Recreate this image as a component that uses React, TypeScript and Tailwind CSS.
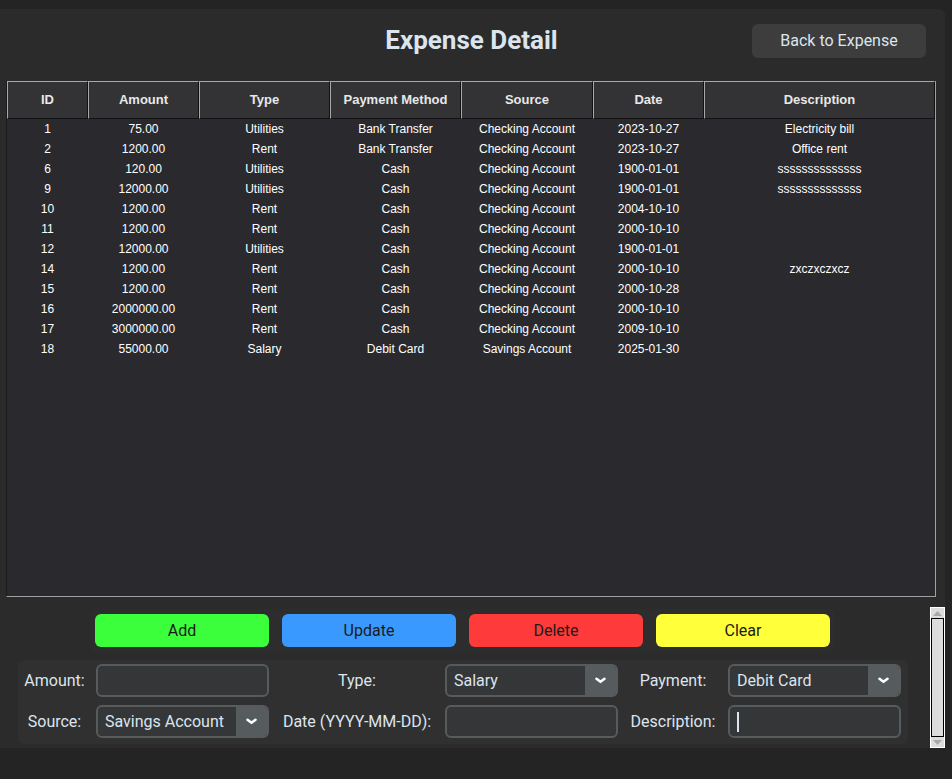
import React from "react";

const columns = ["ID", "Amount", "Type", "Payment Method", "Source", "Date", "Description"];

const rows: string[][] = [
  ["1", "75.00", "Utilities", "Bank Transfer", "Checking Account", "2023-10-27", "Electricity bill"],
  ["2", "1200.00", "Rent", "Bank Transfer", "Checking Account", "2023-10-27", "Office rent"],
  ["6", "120.00", "Utilities", "Cash", "Checking Account", "1900-01-01", "ssssssssssssss"],
  ["9", "12000.00", "Utilities", "Cash", "Checking Account", "1900-01-01", "ssssssssssssss"],
  ["10", "1200.00", "Rent", "Cash", "Checking Account", "2004-10-10", ""],
  ["11", "1200.00", "Rent", "Cash", "Checking Account", "2000-10-10", ""],
  ["12", "12000.00", "Utilities", "Cash", "Checking Account", "1900-01-01", ""],
  ["14", "1200.00", "Rent", "Cash", "Checking Account", "2000-10-10", "zxczxczxcz"],
  ["15", "1200.00", "Rent", "Cash", "Checking Account", "2000-10-28", ""],
  ["16", "2000000.00", "Rent", "Cash", "Checking Account", "2000-10-10", ""],
  ["17", "3000000.00", "Rent", "Cash", "Checking Account", "2009-10-10", ""],
  ["18", "55000.00", "Salary", "Debit Card", "Savings Account", "2025-01-30", ""],
];

const gridCols = "grid grid-cols-[81px_111px_131px_131px_132px_111px_1fr]";

function Chevron() {
  return (
    <svg width="11" height="7" viewBox="0 0 11 7" fill="none">
      <polyline points="1.5,1.8 5.5,4.8 9.5,1.8" stroke="#ffffff" strokeWidth="2.6" strokeLinecap="round" strokeLinejoin="round" />
    </svg>
  );
}

function Entry({ cursor }: { cursor?: boolean }) {
  return (
    <div className="h-[33px] rounded-[6px] border-2 border-[#565b5e] bg-[#343638] flex items-center px-[7px]">
      {cursor && <span className="w-[2px] h-[20px] bg-[#dce4ee]" />}
    </div>
  );
}

function Combo({ value }: { value: string }) {
  return (
    <div className="h-[33px] rounded-[6px] border-2 border-[#565b5e] bg-[#343638] flex overflow-hidden">
      <div className="flex-1 flex items-center pl-[7px] text-[16px] text-[#dce4ee]">{value}</div>
      <div className="w-[31px] bg-[#565b5e] flex items-center justify-center">
        <Chevron />
      </div>
    </div>
  );
}

function Label({ text, first }: { text: string; first?: boolean }) {
  return <div className={`text-[16px] text-[#dce4ee] text-center ${first ? "pr-[5px]" : ""}`}>{text}</div>;
}

export default function App() {
  return (
    <div
      className="w-[952px] h-[779px] bg-[#242424] pt-[9px] overflow-hidden"
      style={{ fontFamily: "Roboto, 'Liberation Sans', sans-serif" }}
    >
      <div className="w-[945px] h-[739px] bg-[#2b2b2b] rounded-tr-[6px] flex flex-col">
        {/* Header */}
        <div className="relative h-[72px] pt-[14px] flex justify-center">
          <h1 className="text-[26px] font-bold text-[#dce4ee] leading-[34px] pr-[2px]">Expense Detail</h1>
          <button className="absolute right-[19px] top-[15px] w-[174px] h-[34px] rounded-[6px] bg-[#3d3d3d] text-[16px] text-[#dce4ee]">
            Back to Expense
          </button>
        </div>

        {/* Table */}
        <div
          className="ml-[6px] w-[930px] h-[517px] bg-[#2a2a2e] border-l border-l-[#1a1a1a] border-r border-r-[#a0a0a0] border-b border-b-[#a0a0a0] flex flex-col"
          style={{ fontFamily: "'Liberation Sans', Arial, sans-serif" }}
        >
          <div className={`${gridCols} h-[38px] bg-[#333336]`}>
            {columns.map((c) => (
              <div
                key={c}
                className="flex items-center justify-center border-t border-l border-[#a8a8a8] border-r border-r-[#111111] border-b border-b-[#111111] text-[13px] font-bold text-[#e8e8e8]"
              >
                {c}
              </div>
            ))}
          </div>
          <div className="flex flex-col">
            {rows.map((r) => (
              <div key={r[0]} className={`${gridCols} h-[20px] items-center text-[12px] text-white`}>
                {r.map((cell, i) => (
                  <div key={i} className="text-center whitespace-nowrap">
                    {cell}
                  </div>
                ))}
              </div>
            ))}
          </div>
        </div>

        {/* Lower scrollable section */}
        <div className="flex mt-[10px] flex-1">
          <div className="flex-1 flex flex-col pt-[2px]">
            <div className="ml-[90px] w-[745px] bg-[#2d2d2d] rounded-[6px] p-[5px] flex gap-[13px]">
              <button className="w-[174px] h-[33px] rounded-[6px] bg-[#3cff3c] text-[16px] text-[#1a1a1a]">Add</button>
              <button className="w-[174px] h-[33px] rounded-[6px] bg-[#3a99ff] text-[16px] text-[#1a1a1a]">Update</button>
              <button className="w-[174px] h-[33px] rounded-[6px] bg-[#ff3a3a] text-[16px] text-[#1a1a1a]">Delete</button>
              <button className="w-[174px] h-[33px] rounded-[6px] bg-[#ffff3a] text-[16px] text-[#1a1a1a]">Clear</button>
            </div>

            <div className="ml-[18px] mt-[8px] w-[890px] bg-[#303030] rounded-[6px] pt-[4px] pb-[6px] grid grid-cols-[78px_173px_176px_173px_110px_173px] gap-y-[8px] items-center">
              <Label text="Amount:" first />
              <Entry />
              <Label text="Type:" />
              <Combo value="Salary" />
              <Label text="Payment:" />
              <Combo value="Debit Card" />

              <Label text="Source:" first />
              <Combo value="Savings Account" />
              <Label text="Date (YYYY-MM-DD):" />
              <Entry />
              <Label text="Description:" />
              <Entry cursor />
            </div>
          </div>

          {/* Scrollbar */}
          <div className="w-[15px] h-[141px] border border-white bg-[#dcdcdc] flex flex-col">
            <div className="h-[11px] border-b border-black flex items-center justify-center">
              <svg width="9" height="5" viewBox="0 0 9 5">
                <polygon points="0,5 4.5,0 9,5" fill="#a8a8a8" />
              </svg>
            </div>
            <div className="flex-1 bg-[#dcdcdc] border-x border-black" />
            <div className="h-[11px] border-t border-black flex items-center justify-center">
              <svg width="9" height="5" viewBox="0 0 9 5">
                <polygon points="0,0 4.5,5 9,0" fill="#a8a8a8" />
              </svg>
            </div>
          </div>
        </div>
      </div>
    </div>
  );
}
